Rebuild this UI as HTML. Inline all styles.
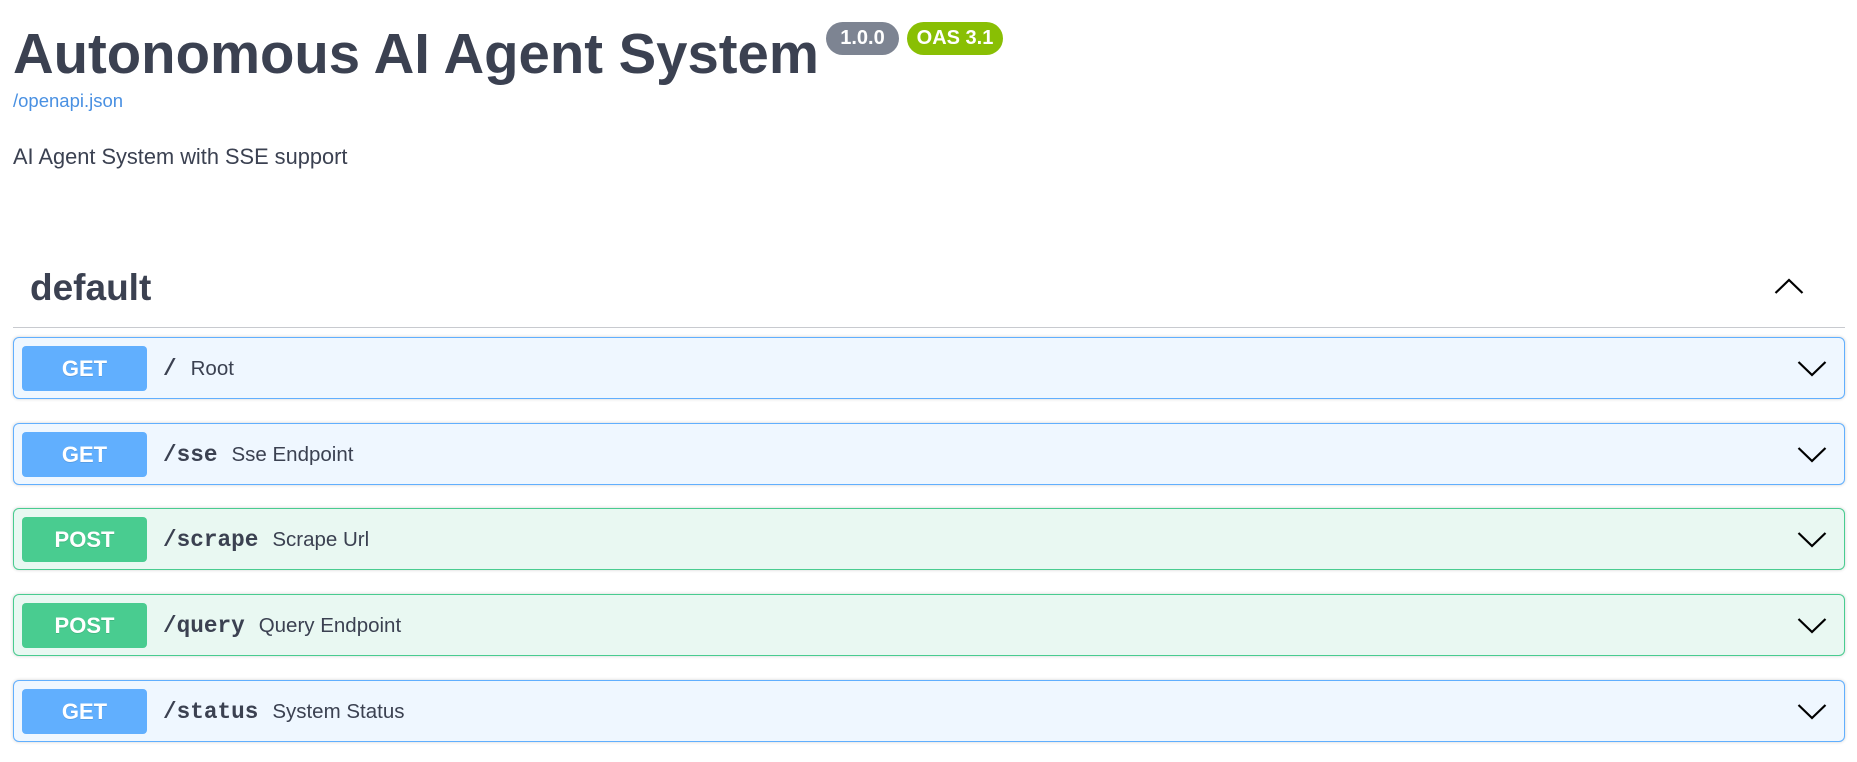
<!DOCTYPE html>
<html><head><meta charset="utf-8"><style>
*{box-sizing:border-box;margin:0;padding:0}
body{width:1857px;height:762px;background:#fff;font-family:"Liberation Sans",Arial,sans-serif;color:#3b4151;position:relative;overflow:hidden}
.t{position:absolute;left:13px;top:19px;font-size:56.3px;font-weight:bold;line-height:70px;white-space:nowrap}
.b{position:absolute;top:22px;height:33px;border-radius:17px;color:#fff;font-weight:bold;font-size:20px;line-height:33px;text-align:center}
.lnk{position:absolute;left:13px;top:90px;font-size:18.5px;color:#4990e2}
.desc{position:absolute;left:13px;top:144px;font-size:21.8px}
.def{position:absolute;left:30px;top:266px;font-size:37px;font-weight:bold;line-height:44px}
.sep{position:absolute;left:13px;top:327px;width:1832px;height:1px;background:#c8cacf}
.row{position:absolute;left:13px;width:1832px;height:62px;border:1px solid;border-radius:6px;box-shadow:0 0 3px rgba(0,0,0,.19);display:flex;align-items:center}
.get{background:#eff7ff;border-color:#61affe}
.post{background:#e9f8f2;border-color:#49cc90}
.m{position:absolute;left:8px;top:8px;width:125px;height:45px;border-radius:4px;color:#fff;font-weight:bold;font-size:22px;line-height:45px;text-align:center;text-shadow:0 1px 0 rgba(0,0,0,.1)}
.get .m{background:#61affe}.post .m{background:#49cc90}
.p{position:absolute;left:149px;top:1px;height:60px;display:flex;align-items:center;white-space:nowrap}
.p b{font-family:"Liberation Mono","DejaVu Sans Mono",monospace;font-size:22.7px;font-weight:bold;margin-right:14px;color:#3b4151}
.p span{font-size:20.5px;color:#3b4151}
.ch{position:absolute;right:17px;top:22px}
</style></head><body>
<div class="t">Autonomous AI Agent System</div>
<div class="b" style="left:826px;width:73px;background:#7d8492">1.0.0</div>
<div class="b" style="left:907px;width:96px;background:#89bf04">OAS 3.1</div>
<div class="lnk">/openapi.json</div>
<div class="desc">AI Agent System with SSE support</div>
<div class="def">default</div>
<svg style="position:absolute;left:1774px;top:277px" width="30" height="18" viewBox="0 0 30 18"><path d="M1.5 16L15 3 28.5 16" fill="none" stroke="#000" stroke-width="2.2"/></svg>
<div class="sep"></div>

<div class="row get" style="top:337px"><div class="m">GET</div><div class="p"><b>/</b><span>Root</span></div><svg class="ch" width="30" height="18" viewBox="0 0 30 18"><path d="M1.5 2L15 15 28.5 2" fill="none" stroke="#000" stroke-width="2.2"/></svg></div>
<div class="row get" style="top:423px"><div class="m">GET</div><div class="p"><b>/sse</b><span>Sse Endpoint</span></div><svg class="ch" width="30" height="18" viewBox="0 0 30 18"><path d="M1.5 2L15 15 28.5 2" fill="none" stroke="#000" stroke-width="2.2"/></svg></div>
<div class="row post" style="top:508px"><div class="m">POST</div><div class="p"><b>/scrape</b><span>Scrape Url</span></div><svg class="ch" width="30" height="18" viewBox="0 0 30 18"><path d="M1.5 2L15 15 28.5 2" fill="none" stroke="#000" stroke-width="2.2"/></svg></div>
<div class="row post" style="top:594px"><div class="m">POST</div><div class="p"><b>/query</b><span>Query Endpoint</span></div><svg class="ch" width="30" height="18" viewBox="0 0 30 18"><path d="M1.5 2L15 15 28.5 2" fill="none" stroke="#000" stroke-width="2.2"/></svg></div>
<div class="row get" style="top:680px"><div class="m">GET</div><div class="p"><b>/status</b><span>System Status</span></div><svg class="ch" width="30" height="18" viewBox="0 0 30 18"><path d="M1.5 2L15 15 28.5 2" fill="none" stroke="#000" stroke-width="2.2"/></svg></div>
</body></html>
